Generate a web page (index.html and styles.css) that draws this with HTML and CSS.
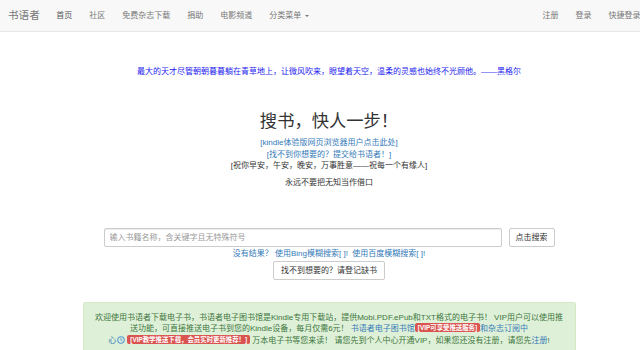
FILE: index.html
```html
<!DOCTYPE html>
<html lang="zh-CN">
<head>
<meta charset="utf-8">
<title>书语者</title>
<link rel="stylesheet" href="styles.css">
</head>
<body>
<div class="page">
  <nav class="navbar">
    <a class="brand" href="#">书语者</a>
    <ul class="nav">
      <li class="active"><a href="#">首页</a></li>
      <li><a href="#">社区</a></li>
      <li><a href="#">免费杂志下载</a></li>
      <li><a href="#">捐助</a></li>
      <li><a href="#">电影频道</a></li>
      <li><a href="#">分类菜单 <span class="caret"></span></a></li>
    </ul>
    <ul class="nav nav-right">
      <li><a href="#">注册</a></li>
      <li><a href="#">登录</a></li>
      <li><a href="#">快捷登录</a></li>
    </ul>
  </nav>

  <p class="quote">最大的天才尽管朝朝暮暮躺在青草地上，让微风吹来，眼望着天空，温柔的灵感也始终不光顾他。——黑格尔</p>

  <section class="hero">
    <h2 class="hero-title">搜书，快人一步！</h2>
    <div class="hero-links">
      <a href="#">[kindle体验版网页浏览器用户点击此处]</a>
      <a href="#">[找不到你想要的？提交给书语者！]</a>
      <span>[祝你早安，午安，晚安，万事胜意——祝每一个有缘人]</span>
    </div>
    <p class="motto">永远不要把无知当作借口</p>
  </section>

  <section class="search">
    <form class="search-row">
      <input class="search-input" type="text" placeholder="输入书籍名称，含关键字且无特殊符号">
      <button class="btn" type="button">点击搜索</button>
    </form>
    <div class="search-alt">没有结果？ 使用<a href="#">Bing模糊搜索[ ]!</a>&nbsp; 使用<a href="#">百度模糊搜索[ ]!</a></div>
    <button class="btn btn-request" type="button">找不到想要的？请登记缺书</button>
  </section>

  <div class="alert">
    欢迎使用书语者下载电子书，书语者电子图书馆是Kindle专用下载站，提供Mobi.PDF.ePub和TXT格式的电子书！ VIP用户可以使用推<br>
    送功能，可直接推送电子书到您的Kindle设备，每月仅需6元！ <a href="#">书语者电子图书馆</a><span class="label">[VIP可享受推送服务]</span><a href="#">和杂志订阅中<br>心</a><svg class="icon" viewBox="0 0 10 10" width="8" height="8"><circle cx="5" cy="5" r="4" fill="none" stroke="#5b9bd5" stroke-width="1.4"/><path d="M5 2.5V5.2L6.8 6.3" fill="none" stroke="#5b9bd5" stroke-width="1.2"/></svg><span class="label">[VIP教学推送下载，会员实时更新推荐！]</span> 万本电子书等您来读！ 请您先到个人中心开通VIP，如果您还没有注册，请您先<a href="#">注册</a>!
  </div>
</div>
</body>
</html>
```

FILE: styles.css
```css
html, body {
  margin: 0;
  padding: 0;
  overflow: hidden;
  background: #fff;
}

body {
  font-family: "Liberation Sans", "Noto Sans CJK SC", sans-serif;
  font-size: 8px;
  color: #333;
}

a {
  color: #337ab7;
  text-decoration: none;
}

.page {
  width: 658px;
}

/* navbar */
.navbar {
  display: flex;
  align-items: center;
  height: 31px;
  background: #f8f8f8;
  border-bottom: 1px solid #e7e7e7;
  padding: 0 9px 0 8px;
}

.brand {
  font-size: 10.6px;
  color: #777;
  line-height: 31px;
  margin-right: 8px;
}

.nav {
  display: flex;
  list-style: none;
  margin: 0;
  padding: 0;
}

.nav li a {
  display: block;
  padding: 0 8.5px;
  line-height: 31px;
  color: #777;
  white-space: nowrap;
}

.nav li.active a {
  color: #555;
}

.nav-right {
  margin-left: auto;
}

.caret {
  display: inline-block;
  width: 0;
  height: 0;
  border-top: 2.5px solid #777;
  border-left: 2.5px solid transparent;
  border-right: 2.5px solid transparent;
  vertical-align: middle;
  margin-left: 1px;
}

/* quote */
.quote {
  margin: 34px 0 0;
  text-align: center;
  color: #1a1aee;
  line-height: 12px;
}

/* hero */
.hero {
  text-align: center;
  margin-top: 32px;
}

.hero-title {
  margin: 0;
  font-size: 17.3px;
  font-weight: 400;
  line-height: 22px;
  color: #333;
}

.hero-links {
  display: flex;
  flex-direction: column;
  align-items: center;
  margin-top: 5px;
  line-height: 11.5px;
}

.motto {
  margin: 5px 0 0;
  line-height: 12px;
}

/* search */
.search {
  width: 451px;
  margin: 39px auto 0;
  display: flex;
  flex-direction: column;
  align-items: center;
}

.search-row {
  display: flex;
  gap: 7px;
  width: 100%;
  margin: 0;
}

.search-input {
  flex: 1;
  height: 19px;
  box-sizing: border-box;
  border: 1px solid #ccc;
  border-radius: 2px;
  padding: 0 5px;
  font-family: inherit;
  font-size: 8px;
  color: #555;
  box-shadow: inset 0 1px 1px rgba(0,0,0,.075);
}

.search-input::placeholder {
  color: #999;
}

.btn {
  height: 19px;
  box-sizing: border-box;
  border: 1px solid #ccc;
  border-radius: 2px;
  background: #fff;
  color: #333;
  font-family: inherit;
  font-size: 8px;
  padding: 0 6px;
  line-height: 17px;
}

.search-row .btn {
  width: 46px;
  padding: 0;
}

.search-alt {
  margin-top: 1px;
  line-height: 11px;
  color: #337ab7;
}

.btn-request {
  margin-top: 2px;
  width: 112px;
  padding: 0;
}

/* alert */
.alert {
  width: 493px;
  box-sizing: border-box;
  margin: 22px auto 0;
  padding: 9px 4px;
  background: #dff0d8;
  border: 1px solid #d6e9c6;
  border-radius: 2px;
  color: #3c763d;
  text-align: center;
  line-height: 11.5px;
  white-space: nowrap;
}

.label {
  display: inline-block;
  background: #d9534f;
  color: #fff;
  font-weight: 700;
  font-size: 6.4px;
  line-height: 9px;
  padding: 0 3px;
  border-radius: 2px;
  vertical-align: 1px;
}

.icon {
  vertical-align: -1px;
  margin: 0 2px 0 1px;
}
```
